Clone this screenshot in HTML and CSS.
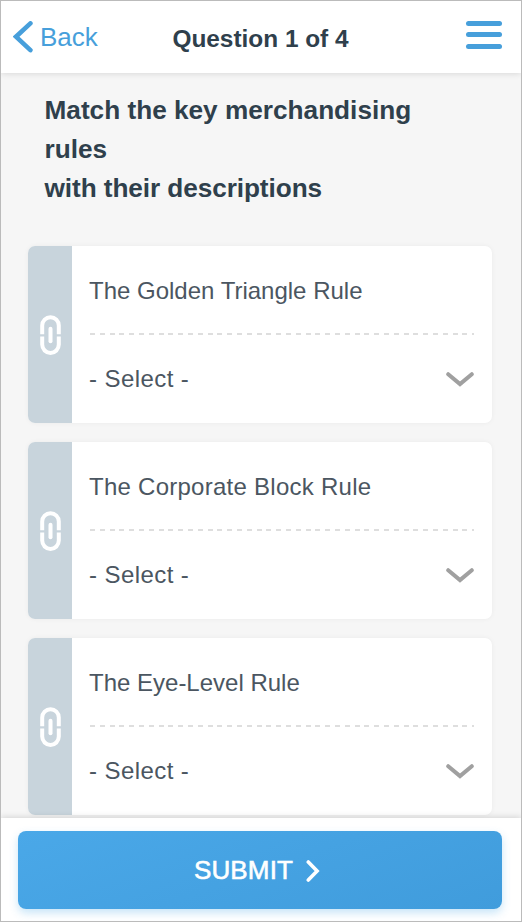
FILE: index.html
```html
<!DOCTYPE html>
<html lang="en">
<head>
<meta charset="utf-8">
<title>Question 1 of 4</title>
<link rel="stylesheet" href="styles.css">
</head>
<body>
<svg width="0" height="0" class="defs">
  <symbol id="link" viewBox="0 0 22 40">
    <path d="M3.2 19.2v-8.7a8.3 8.3 0 0 1 16.6 0v8.7M3.2 21.6v8a8.3 8.3 0 0 0 16.6 0v-8" fill="none" stroke="#fff" stroke-width="4"/>
    <path d="M11.5 13.8v12.4" stroke="#fff" stroke-width="4" stroke-linecap="round"/>
  </symbol>
  <symbol id="chevron" viewBox="0 0 28 16">
    <path d="M2.2 3.2 14 13.1 25.8 3.2" fill="none" stroke="#a0a0a0" stroke-width="4" stroke-linecap="round"/>
  </symbol>
</svg>
<div class="screen">
  <header class="topbar">
    <a class="back">
      <svg class="back-icon" width="20" height="32" viewBox="0 0 20 32"><path d="M17.4 2.4 3 15.7l14.4 13.4" fill="none" stroke="#479fdb" stroke-width="4.6" stroke-linecap="round"/></svg>
      <span>Back</span>
    </a>
    <h1 class="title">Question 1 of 4</h1>
    <div class="menu"><i></i><i></i><i></i></div>
  </header>
  <main class="content">
    <h2 class="prompt">Match the key merchandising rules<br><span class="line">with their descriptions</span></h2>
    <div class="cards">
      <section class="card">
        <div class="tab"><svg width="22" height="40"><use href="#link"/></svg></div>
        <div class="body">
          <div class="name">The Golden Triangle Rule</div>
          <div class="select"><span>- Select -</span><svg width="28" height="16"><use href="#chevron"/></svg></div>
        </div>
      </section>
      <section class="card">
        <div class="tab"><svg width="22" height="40"><use href="#link"/></svg></div>
        <div class="body">
          <div class="name wide">The Corporate Block Rule</div>
          <div class="select"><span>- Select -</span><svg width="28" height="16"><use href="#chevron"/></svg></div>
        </div>
      </section>
      <section class="card">
        <div class="tab"><svg width="22" height="40"><use href="#link"/></svg></div>
        <div class="body">
          <div class="name">The Eye-Level Rule</div>
          <div class="select"><span>- Select -</span><svg width="28" height="16"><use href="#chevron"/></svg></div>
        </div>
      </section>
    </div>
  </main>
  <footer class="footer">
    <button class="submit"><span>SUBMIT</span><svg width="14" height="22" viewBox="0 0 14 22"><path d="m2.3 2 8.8 9-8.8 9" fill="none" stroke="#fff" stroke-width="3.6" stroke-linecap="round"/></svg></button>
  </footer>
</div>
</body>
</html>
```
FILE: styles.css
```css
* { box-sizing: border-box; }
body {
  margin: 0;
  font-family: "Liberation Sans", Arial, sans-serif;
  color: #2f404c;
}
.defs { display: block; }
.screen {
  width: 522px;
  height: 922px;
  border: 1px solid #bbb;
  background: #f6f6f6;
  display: flex;
  flex-direction: column;
  overflow: hidden;
}
.topbar {
  height: 72px;
  flex: none;
  display: grid;
  grid-template-columns: 153px 1fr 147px;
  align-items: center;
  padding: 0 19px 0 12px;
  background: #fff;
  box-shadow: 0 1px 6px rgba(0, 0, 0, .12);
  z-index: 1;
}
.back {
  display: flex;
  align-items: center;
  gap: 7px;
  color: #479fdb;
  font-size: 26px;
}
.title {
  margin: 4px 0 0;
  font-size: 24.4px;
  line-height: 30px;
  text-align: center;
  white-space: nowrap;
}
.menu {
  justify-self: end;
  width: 36px;
  display: grid;
  gap: 6.5px;
  margin-top: -5px;
}
.menu i {
  height: 5px;
  border-radius: 2.5px;
  background: #479fdb;
}
.content {
  flex: 1;
  min-height: 0;
  padding: 18px 29px 0 27px;
}
.prompt {
  margin: 0 17px 38px 16.5px;
  font-size: 26.2px;
  line-height: 39px;
}
.line { letter-spacing: -.08px; }
.cards {
  display: grid;
  gap: 19px;
}
.card {
  height: 177px;
  display: flex;
  border-radius: 7px;
  background: #fff;
  box-shadow: 0 0 5px rgba(0, 0, 0, .05);
  overflow: hidden;
}
.tab {
  width: 44px;
  display: grid;
  place-items: center;
  background: #c8d4dc;
}
.body {
  flex: 1;
  padding: 0 18px 0 17px;
  color: #4b5661;
  font-size: 24px;
}
.name {
  height: 89px;
  line-height: 90px;
  background: repeating-linear-gradient(90deg, #dedede 0 5px, transparent 5px 9.8px) 1px 100% / 100% 2px no-repeat;
}
.wide { letter-spacing: .26px; }
.select {
  height: 88px;
  display: flex;
  align-items: center;
  justify-content: space-between;
}
.select span { letter-spacing: .42px; }
.footer {
  flex: none;
  height: 103px;
  padding: 13px 19px 12px 17px;
  background: #fff;
  box-shadow: 0 -1px 6px rgba(0, 0, 0, .14);
  z-index: 1;
}
.submit {
  width: 100%;
  height: 78px;
  display: flex;
  align-items: center;
  justify-content: center;
  gap: 13px;
  padding: 1px 6px 0 0;
  border: 0;
  border-radius: 8px;
  background: linear-gradient(160deg, #4aa8e8, #409cdc);
  box-shadow: 0 4px 9px rgba(74, 168, 232, .3);
  color: #fff;
  font: 26px "Liberation Sans", Arial, sans-serif;
  letter-spacing: .15px;
  -webkit-text-stroke: .6px #fff;
}
```
